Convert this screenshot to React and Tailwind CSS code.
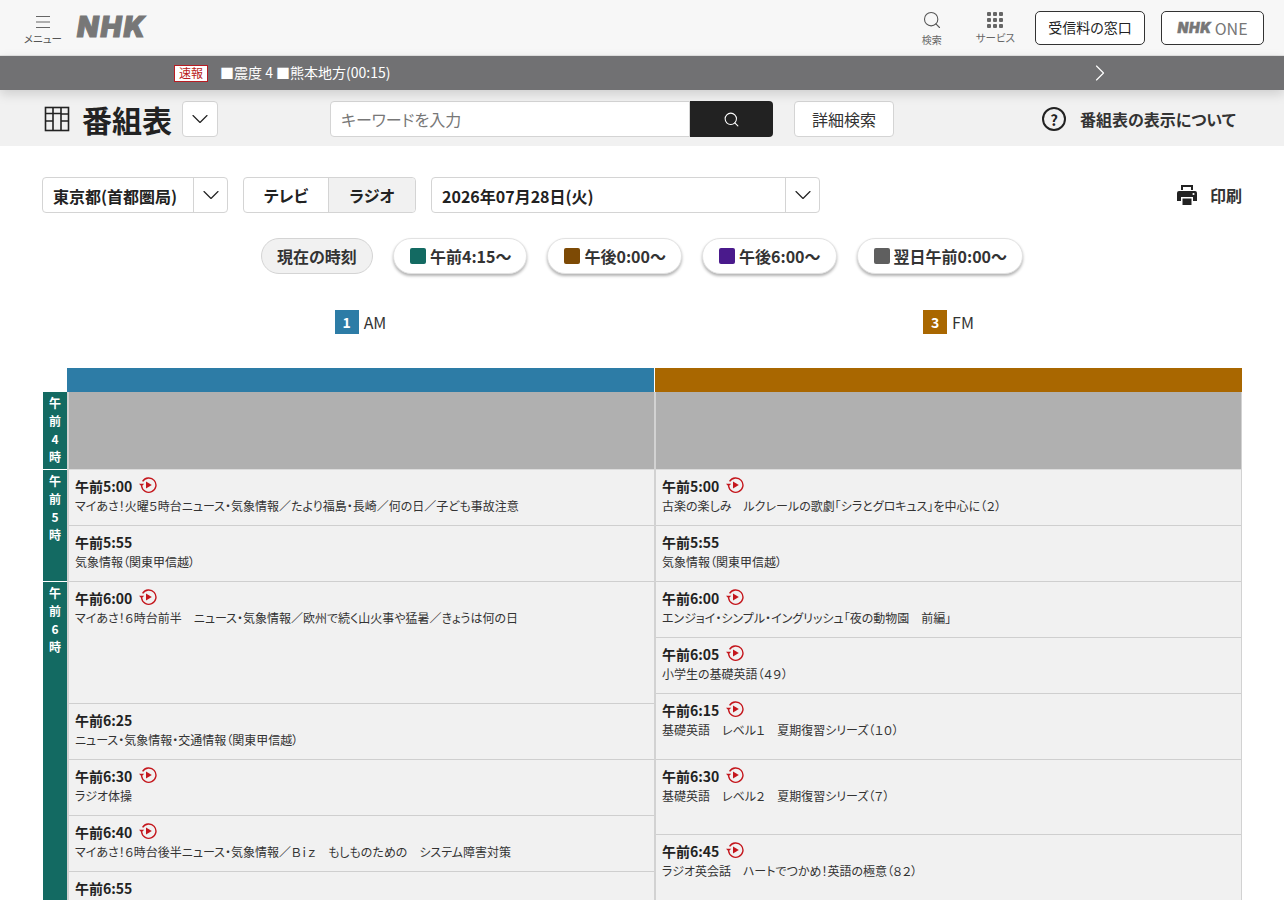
import { ChevronDown, ChevronRight, Search } from "lucide-react";

const font = { fontFamily: '"Noto Sans CJK JP", "Noto Sans", sans-serif' };

// listings use full-width latin, digits and spaces
const wide = (s) =>
  s.replace(/[!-~]/g, (c) => String.fromCharCode(c.charCodeAt(0) + 0xfee0)).replace(/ /g, "\u3000");

const leftRows = [
  { h: "h-[56px]", time: "午前5:00", replay: true, title: "マイあさ!火曜5時台ニュース・気象情報/たより福島・長崎/何の日/子ども事故注意" },
  { h: "h-[56px]", time: "午前5:55", title: "気象情報(関東甲信越)" },
  { h: "h-[122px]", time: "午前6:00", replay: true, title: "マイあさ!6時台前半 ニュース・気象情報/欧州で続く山火事や猛暑/きょうは何の日" },
  { h: "h-[56px]", time: "午前6:25", title: "ニュース・気象情報・交通情報(関東甲信越)" },
  { h: "h-[56px]", time: "午前6:30", replay: true, title: "ラジオ体操" },
  { h: "h-[56px]", time: "午前6:40", replay: true, title: "マイあさ!6時台後半ニュース・気象情報/Biz もしものための システム障害対策" },
  { h: "h-[56px]", time: "午前6:55", title: "" },
];

const rightRows = [
  { h: "h-[56px]", time: "午前5:00", replay: true, title: "古楽の楽しみ ルクレールの歌劇「シラとグロキュス」を中心に(2)" },
  { h: "h-[56px]", time: "午前5:55", title: "気象情報(関東甲信越)" },
  { h: "h-[56px]", time: "午前6:00", replay: true, title: "エンジョイ・シンプル・イングリッシュ「夜の動物園 前編」" },
  { h: "h-[56px]", time: "午前6:05", replay: true, title: "小学生の基礎英語(49)" },
  { h: "h-[66px]", time: "午前6:15", replay: true, title: "基礎英語 レベル1 夏期復習シリーズ(10)" },
  { h: "h-[75px]", time: "午前6:30", replay: true, title: "基礎英語 レベル2 夏期復習シリーズ(7)" },
  { h: "h-[66px]", time: "午前6:45", replay: true, title: "ラジオ英会話 ハートでつかめ!英語の極意(82)" },
];

const jumps = [
  { color: "bg-[#136a62]", label: "午前4:15〜" },
  { color: "bg-[#7d4a05]", label: "午後0:00〜" },
  { color: "bg-[#4a1a8c]", label: "午後6:00〜" },
  { color: "bg-[#5f5f5f]", label: "翌日午前0:00〜" },
];

function ReplayIcon() {
  return (
    <svg width="18" height="18" viewBox="0 0 18 18" fill="none" className="shrink-0">
      <path d="M3.6 5.4A7.2 7.2 0 1 1 2.6 10" stroke="#c4161c" strokeWidth="1.4" />
      <path d="M0 7.8 2.6 10.6 5.2 7.8Z" fill="#c4161c" />
      <path d="M7 5.4 12.8 9 7 12.6Z" fill="#c4161c" />
    </svg>
  );
}

function GridIcon() {
  return (
    <svg width="26" height="26" viewBox="0 0 26 26" fill="none" stroke="#222" strokeWidth="1.6">
      <rect x="1.5" y="1.5" width="23" height="23" />
      <path d="M1.5 7.5H17M9 1.5V24.5M17 1.5V24.5M1.5 15H9M17 8H24.5M17 15H24.5" />
    </svg>
  );
}

function PrinterIcon() {
  return (
    <svg width="22" height="22" viewBox="0 0 22 22" fill="#222">
      <path d="M5 1H17V6H15V3H7V6H5Z" />
      <path d="M3 7H19A2 2 0 0 1 21 9V17H17V13H5V17H1V9A2 2 0 0 1 3 7Z" />
      <path d="M6.5 14.5H15.5V21H6.5Z" />
      <circle cx="17.5" cy="10" r="1.1" fill="#fff" />
    </svg>
  );
}

function Program({ row }) {
  return (
    <div className={`${row.h} shrink-0 border-b border-[#cfcfcf] px-[6px] pt-[4px]`}>
      <div className="flex h-[24px] items-center gap-[7px] text-[14px] font-bold leading-[24px] text-[#222]">
        <span>{row.time}</span>
        {row.replay && <span className="-mt-[3px] flex"><ReplayIcon /></span>}
      </div>
      <p className="-mt-[1px] whitespace-pre text-[12px] leading-[18px] text-[#333]">{wide(row.title)}</p>
    </div>
  );
}

function HourCell({ className, chars }) {
  return (
    <div className={`${className} flex flex-col items-center border-b border-white bg-[#136a62] pt-[2px] text-[12px] font-bold leading-[18px] text-white`}>
      {chars.map((c, i) => (
        <span key={i}>{c}</span>
      ))}
    </div>
  );
}

export default function App() {
  return (
    <div className="h-[900px] overflow-hidden bg-white [font-feature-settings:'palt']" style={font}>
      <header className="flex h-[56px] items-center border-b border-[#e4e4e4] bg-[#f7f7f7] pr-[20px]">
        <div className="ml-[23px] flex w-[40px] flex-col items-center pt-[3px]">
          <svg width="16" height="16" viewBox="0 0 16 16" stroke="#666" strokeWidth="1.2">
            <path d="M1 2.5H15M1 8H15M1 13.5H15" />
          </svg>
          <span className="mt-[3px] whitespace-nowrap text-[10.5px] leading-[12px] text-[#555]">メニュー</span>
        </div>
        <span className="ml-[14px] -mt-[2px] text-[28px] font-black italic leading-none tracking-[2px] text-[#777] [-webkit-text-stroke:1px_#777]" style={{ fontFamily: "Inter, sans-serif" }}>
          NHK
        </span>
        <div className="ml-auto flex flex-col items-center">
          <Search size={20} strokeWidth={1.3} className="text-[#555]" />
          <span className="mt-[4px] text-[10px] leading-[12px] text-[#666]">検索</span>
        </div>
        <div className="ml-[34px] flex flex-col items-center">
          <div className="grid grid-cols-3 gap-[2px]">
            {Array.from({ length: 9 }).map((_, i) => (
              <span key={i} className="h-[4px] w-[4px] rounded-[1px] bg-[#666]" />
            ))}
          </div>
          <span className="mt-[4px] text-[10.5px] leading-[12px] text-[#666]">サービス</span>
        </div>
        <button className="ml-[20px] h-[34px] w-[110px] rounded-[5px] border border-[#333] bg-white text-[14px] text-[#222]">
          受信料の窓口
        </button>
        <button className="ml-[16px] flex h-[34px] w-[103px] items-center justify-center gap-[3px] rounded-[5px] border border-[#333] bg-white text-[#777]">
          <span className="text-[14px] font-black italic tracking-[0.8px] [-webkit-text-stroke:0.5px_#777]" style={{ fontFamily: "Inter, sans-serif" }}>NHK</span>
          <span className="text-[16px]">ONE</span>
        </button>
      </header>

      <div className="relative z-10 flex h-[34px] items-center bg-[#717173] pl-[174px] shadow-[0_4px_12px_rgba(0,0,0,0.15)]">
        <span className="flex h-[17px] w-[34px] items-center justify-center border border-[#b81c22] bg-white text-[12px] leading-none text-[#b81c22]">速報</span>
        <span className="ml-[12px] -mt-[1px] whitespace-pre text-[14px] text-white">■震度 4 ■熊本地方(00:15)</span>
        <ChevronRight size={28} strokeWidth={1} className="absolute left-[1086px] text-white" />
      </div>

      <div className="flex h-[56px] items-center bg-[#f1f1f1] pl-[44px] pt-[2px]">
        <GridIcon />
        <h1 className="ml-[12px] w-[90px] whitespace-nowrap text-[30px] font-bold leading-none text-[#222]">番組表</h1>
        <button className="ml-[10px] flex h-[36px] w-[36px] items-center justify-center rounded-[4px] border border-[#d4d4d4] bg-white">
          <ChevronDown size={28} strokeWidth={1} className="text-[#222]" />
        </button>
        <div className="ml-[112px] flex h-[36px] w-[443px]">
          <div className="flex flex-1 items-center rounded-l-[4px] border border-[#d4d4d4] bg-white pl-[10px] text-[16px] text-[#777]">
            キーワードを入力
          </div>
          <div className="flex w-[83px] items-center justify-center rounded-r-[4px] bg-[#222]">
            <Search size={17} strokeWidth={1.5} className="text-white" />
          </div>
        </div>
        <button className="ml-[21px] h-[36px] w-[100px] rounded-[4px] border border-[#d4d4d4] bg-white text-[16px] text-[#333]">
          詳細検索
        </button>
        <div className="ml-[148px] flex items-center gap-[14px]">
          <span className="flex h-[24px] w-[24px] items-center justify-center rounded-full border-2 border-[#222] text-[15px] font-bold leading-none text-[#222]">?</span>
          <span className="text-[16px] font-bold text-[#333]">番組表の表示について</span>
        </div>
      </div>

      <div className="mx-[42px] mt-[31px] flex h-[36px] items-center">
        <div className="flex h-[36px] w-[186px] rounded-[4px] border border-[#d4d4d4]">
          <span className="flex-1 pl-[10px] text-[16px] font-bold leading-[36px] text-[#222]">東京都(首都圏局)</span>
          <span className="flex w-[34px] items-center justify-center border-l border-[#d4d4d4]">
            <ChevronDown size={28} strokeWidth={1} className="text-[#222]" />
          </span>
        </div>
        <div className="ml-[15px] flex h-[36px] w-[173px] rounded-[4px] border border-[#d4d4d4] text-[16px] font-bold text-[#222]">
          <span className="flex w-[84px] items-center justify-center">テレビ</span>
          <span className="flex flex-1 items-center justify-center rounded-r-[4px] border-l border-[#d4d4d4] bg-[#f1f1f1]">ラジオ</span>
        </div>
        <div className="ml-[15px] flex h-[36px] w-[389px] rounded-[4px] border border-[#d4d4d4]">
          <span className="flex-1 pl-[10px] text-[16px] font-bold leading-[36px] text-[#222]">2026年07月28日(火)</span>
          <span className="flex w-[34px] items-center justify-center border-l border-[#d4d4d4]">
            <ChevronDown size={28} strokeWidth={1} className="text-[#222]" />
          </span>
        </div>
        <div className="ml-auto flex items-center gap-[12px]">
          <PrinterIcon />
          <span className="text-[16px] font-bold text-[#333]">印刷</span>
        </div>
      </div>

      <div className="mt-[25px] flex h-[36px] justify-center gap-[20px]">
        <span className="flex w-[112px] items-center justify-center rounded-full border border-[#d4d4d4] bg-[#f1f1f1] text-[16px] font-bold text-[#333]">現在の時刻</span>
        {jumps.map((j) => (
          <span key={j.label} className="flex items-center gap-[4px] rounded-full border border-[#e2e2e2] bg-white pl-[16px] pr-[15px] text-[16px] font-bold text-[#333] shadow-[0_2px_3px_rgba(0,0,0,0.3)]">
            <span className={`h-[16px] w-[16px] rounded-[2px] ${j.color}`} />
            {j.label}
          </span>
        ))}
      </div>

      <div className="ml-[43px] mr-[42px] mt-[36px] flex h-[24px] pl-[24px]">
        <div className="flex w-[588px] items-center justify-center gap-[5px] pr-[1px] text-[16px] text-[#333]">
          <span className="flex h-[24px] w-[24px] items-center justify-center bg-[#2d7ca6] text-[14px] font-bold text-white">1</span>
          AM
        </div>
        <div className="flex w-[587px] items-center justify-center gap-[5px] text-[16px] text-[#333]">
          <span className="flex h-[24px] w-[24px] items-center justify-center bg-[#a96700] text-[14px] font-bold text-white">3</span>
          FM
        </div>
      </div>

      <div className="ml-[43px] mr-[42px] mt-[34px] flex">
        <div className="flex w-[24px] shrink-0 flex-col pt-[24px]">
          <HourCell className="h-[78px]" chars={["午", "前", "4", "時"]} />
          <HourCell className="h-[112px]" chars={["午", "前", "5", "時"]} />
          <HourCell className="h-[340px]" chars={["午", "前", "6", "時"]} />
        </div>
        <div className="flex w-[588px] flex-col">
          <div className="h-[24px] border-r border-white bg-[#2d7ca6]" />
          <div className="flex flex-col border-x border-l-2 border-[#d2d2d2] bg-[#f1f1f1]">
            <div className="h-[78px] shrink-0 border-b border-[#dcdcdc] bg-[#b0b0b0]" />
            {leftRows.map((row) => (
              <Program key={row.time} row={row} />
            ))}
          </div>
        </div>
        <div className="flex w-[587px] flex-col">
          <div className="h-[24px] bg-[#a96700]" />
          <div className="flex flex-col border-x border-[#d2d2d2] bg-[#f1f1f1]">
            <div className="h-[78px] shrink-0 border-b border-[#dcdcdc] bg-[#b0b0b0]" />
            {rightRows.map((row) => (
              <Program key={row.time} row={row} />
            ))}
          </div>
        </div>
      </div>
    </div>
  );
}
